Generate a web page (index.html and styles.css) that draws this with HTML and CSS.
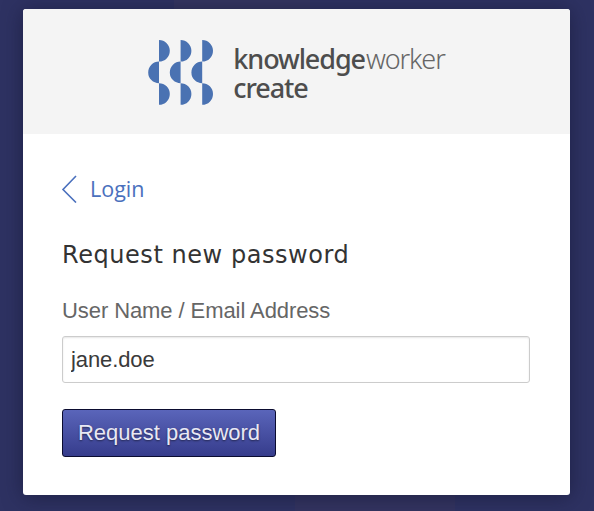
FILE: index.html
```html
<!DOCTYPE html>
<html lang="en">

<head>
  <meta charset="UTF-8">
  <meta name="viewport" content="width=device-width, initial-scale=1.0">
  <title>Request new password</title>
  <link rel="stylesheet" href="styles.css">
</head>

<body>
  <div class="card">
    <div class="card-head">
      <svg class="logo" width="66" height="66" viewBox="0 0 66 66">
        <path d="M11 0a10.8 10.8 0 0 1 0 21.6zM32.6 0a10.8 10.8 0 0 1 0 21.6zM54.2 0a10.8 10.8 0 0 1 0 21.6z" />
        <path d="M11 21.6a10.8 10.8 0 0 0 0 21.6zM32.6 21.6a10.8 10.8 0 0 0 0 21.6zM54.2 21.6a10.8 10.8 0 0 0 0 21.6z" />
        <path d="M11 43.2a10.8 10.8 0 0 1 0 21.6zM32.6 43.2a10.8 10.8 0 0 1 0 21.6zM54.2 43.2a10.8 10.8 0 0 1 0 21.6z" />
      </svg>
      <div class="brand">
        <div class="brand-line"><b>knowledge</b><span>worker</span></div>
        <div><b>create</b></div>
      </div>
    </div>
    <div class="card-body">
      <a class="back" href="#">
        <svg width="16" height="28" viewBox="0 0 16 28">
          <path d="M15 1 2 14.500 15 27.500" />
        </svg>
        <span class="back-text">Login</span>
      </a>
      <h1>Request new password</h1>
      <label for="user">User Name / Email Address</label>
      <input id="user" type="text" value="jane.doe">
      <button type="button">Request password</button>
    </div>
  </div>
</body>

</html>
```

FILE: styles.css
```css
* {
  margin: 0;
  padding: 0;
  box-sizing: border-box;
}

html {
  height: 100%;
}

body {
  height: 100%;
  padding: 9px 24px 0 23px;
  overflow: hidden;
  background-color: #2e3262;
  background-image:
    linear-gradient(#353661, #353661),
    linear-gradient(#333460, #333460);
  background-size: 136px 60px, 160px 60px;
  background-position: 174px 0, 295px 100%;
  background-repeat: no-repeat;
  font-family: "Liberation Sans", Arial, sans-serif;
}

.card {
  height: 486px;
  background-color: #fff;
  border-radius: 3px;
  overflow: hidden;
  box-shadow: 0 2px 20px rgba(20, 22, 50, 0.6);
}

.card-head {
  height: 125px;
  padding-top: 2px;
  background-color: #f4f4f4;
  display: flex;
  align-items: center;
  justify-content: center;
  gap: 19px;
}

.logo {
  fill: #4a72b2;
}

.brand {
  font-family: "Noto Sans", sans-serif;
  font-size: 27px;
  line-height: 29px;
  letter-spacing: -1.1px;
  color: #666;
  font-weight: 300;
}

.brand b {
  font-weight: 500;
  color: #4d4d4d;
}

.brand-line {
  display: flex;
  gap: 1px;
}

.card-body {
  padding: 40px 40px 0 38px;
}

.back {
  display: flex;
  align-items: center;
  gap: 13px;
  height: 30px;
  color: #4a70bd;
  text-decoration: none;
  font-family: "Open Sans", sans-serif;
  font-size: 21.500px;
}

.back svg {
  fill: none;
  stroke: #4a70bd;
  stroke-width: 1.6;
}

.back-text {
  margin-top: -2px;
}

h1 {
  margin-top: 35px;
  margin-left: 1px;
  font-family: "DejaVu Sans", sans-serif;
  font-size: 24px;
  font-weight: 400;
  letter-spacing: 0.55px;
  line-height: 32px;
  color: #333;
}

label {
  display: block;
  margin-top: 26px;
  margin-left: 1px;
  font-size: 22px;
  letter-spacing: -0.08px;
  line-height: 28px;
  color: #666;
}

input {
  display: block;
  width: 468px;
  height: 47px;
  margin: 11px 0 0 1px;
  padding: 0 8px;
  border: 1px solid #ccc;
  border-radius: 3px;
  box-shadow: inset 0 1px 2px rgba(0, 0, 0, 0.1);
  font-family: "Liberation Sans", Arial, sans-serif;
  font-size: 22px;
  letter-spacing: -0.1px;
  color: #3a3a3a;
}

button {
  display: block;
  width: 214px;
  height: 48px;
  margin: 26px 0 0 1px;
  border: 1px solid #0b0c30;
  border-radius: 3px;
  background: linear-gradient(#5a65ba, #363c8c);
  font-family: "Liberation Sans", Arial, sans-serif;
  font-size: 22px;
  color: #e8e8f4;
  text-shadow: 0 1px 2px rgba(0, 0, 0, 0.5);
}
```
